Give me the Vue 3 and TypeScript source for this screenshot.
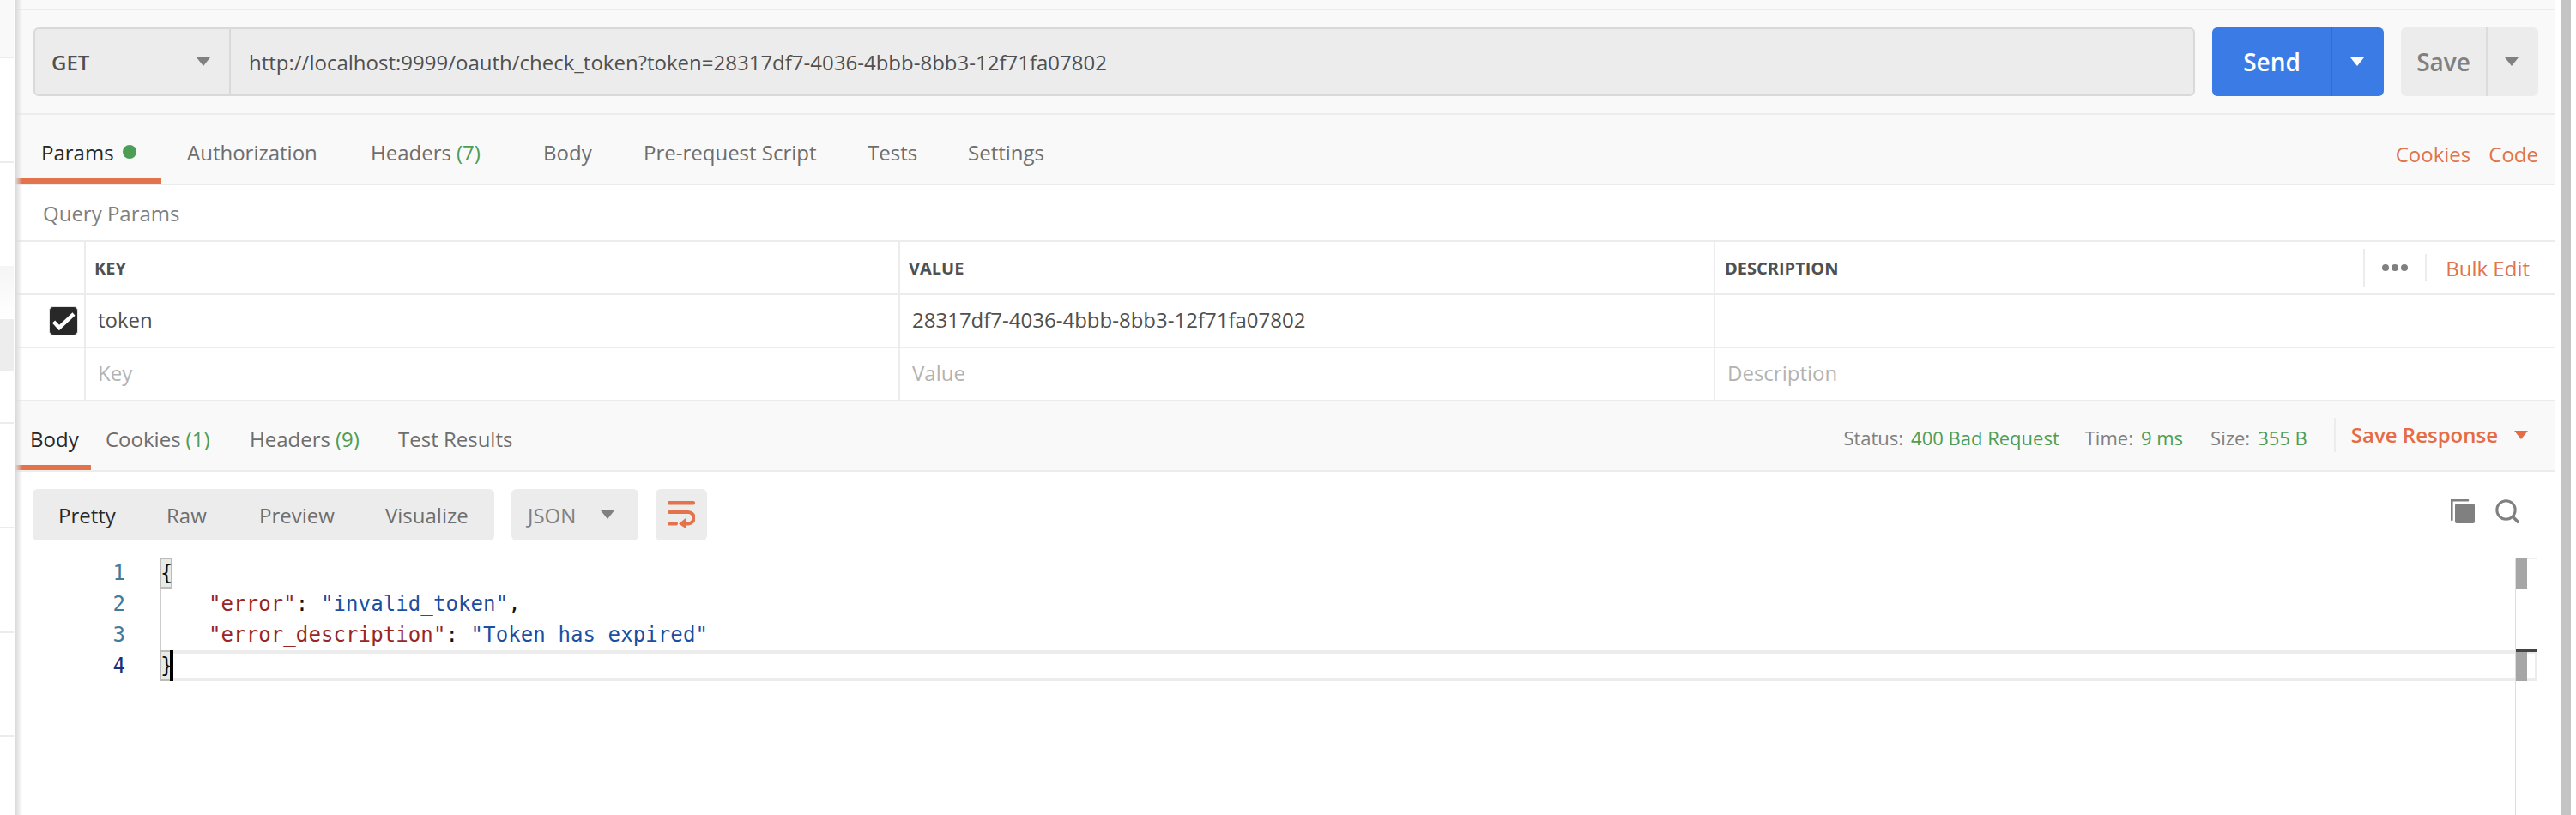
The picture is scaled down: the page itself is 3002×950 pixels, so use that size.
<script setup lang="ts">
const tabs: { label: string; count?: string; dot?: boolean; active?: boolean }[] = [
  { label: 'Params', dot: true, active: true },
  { label: 'Authorization' },
  { label: 'Headers', count: '(7)' },
  { label: 'Body' },
  { label: 'Pre-request Script' },
  { label: 'Tests' },
  { label: 'Settings' },
]
const respTabs: { label: string; count?: string; active?: boolean }[] = [
  { label: 'Body', active: true },
  { label: 'Cookies', count: '(1)' },
  { label: 'Headers', count: '(9)' },
  { label: 'Test Results' },
]
const views = ['Pretty', 'Raw', 'Preview', 'Visualize']
</script>

<template>
  <div class="page">
    <aside class="strip">
      <div class="s s1"></div>
      <div class="s s2"></div>
      <div class="s s3"></div>
      <div class="s s4"></div>
      <div class="s s5"></div>
      <div class="s s6"></div>
      <div class="s s7"></div>
      <div class="s s8"></div>
      <div class="s s9"></div>
      <div class="s s10"></div>
    </aside>

    <main class="main">
      <div class="top"></div>

      <div class="urlbar">
        <div class="address">
          <div class="method"><span>GET</span><i class="tri gray"></i></div>
          <div class="url">http://localhost:9999/oauth/check_token?token=28317df7-4036-4bbb-8bb3-12f71fa07802</div>
        </div>
        <div class="send">
          <span class="send-label">Send</span>
          <span class="send-drop"><i class="tri white"></i></span>
        </div>
        <div class="save">
          <span class="save-label">Save</span>
          <span class="save-drop"><i class="tri gray"></i></span>
        </div>
      </div>

      <nav class="req-tabs">
        <div v-for="t in tabs" :key="t.label" class="tab" :class="{ active: t.active }">
          {{ t.label }}<span v-if="t.count" class="count">{{ t.count }}</span><i v-if="t.dot" class="dot"></i>
        </div>
        <div class="req-links"><span>Cookies</span><span>Code</span></div>
      </nav>

      <div class="qp-title">Query Params</div>

      <div class="row head">
        <div class="c0"></div>
        <div class="c1">KEY</div>
        <div class="c2">VALUE</div>
        <div class="c3">
          <span>DESCRIPTION</span>
          <div class="head-tools">
            <span class="dots"><i></i><i></i><i></i></span>
            <span class="bulk">Bulk Edit</span>
          </div>
        </div>
      </div>
      <div class="row">
        <div class="c0">
          <span class="check">
            <svg width="32" height="32" viewBox="0 0 32 32"><path d="M4.5 17 L11 24 L28 8" fill="none" stroke="#fff" stroke-width="4.5" /></svg>
          </span>
        </div>
        <div class="c1 cell">token</div>
        <div class="c2 cell">28317df7-4036-4bbb-8bb3-12f71fa07802</div>
        <div class="c3 cell"></div>
      </div>
      <div class="row">
        <div class="c0"></div>
        <div class="c1 cell ph">Key</div>
        <div class="c2 cell ph">Value</div>
        <div class="c3 cell ph">Description</div>
      </div>

      <nav class="resp-tabs">
        <div v-for="t in respTabs" :key="t.label" class="tab" :class="{ active: t.active }">
          {{ t.label }}<span v-if="t.count" class="count">{{ t.count }}</span>
        </div>
        <div class="meta">
          <span class="m-label">Status:</span><span class="m-val mv1">400 Bad Request</span>
          <span class="m-label">Time:</span><span class="m-val mv2">9 ms</span>
          <span class="m-label">Size:</span><span class="m-val mv3">355 B</span>
          <span class="save-resp">Save Response<i class="tri orange"></i></span>
        </div>
      </nav>

      <div class="toolbar">
        <div class="views">
          <span v-for="(v, i) in views" :key="v" :class="{ on: i === 0 }">{{ v }}</span>
        </div>
        <div class="lang"><span>JSON</span><i class="tri gray"></i></div>
        <div class="wrap">
          <svg width="32" height="32" viewBox="0 0 32 32">
            <rect x="0" y="0" width="32" height="4.5" rx="2" fill="#e2734a" />
            <path d="M2 13 H24 a6.7 6.7 0 0 1 0 13.4 H18" fill="none" stroke="#e2734a" stroke-width="4" stroke-linecap="round" />
            <path d="M21 20 L13 26.4 L21 32 Z" fill="#e2734a" />
            <rect x="0" y="24.2" width="12" height="4.4" rx="2" fill="#e2734a" />
          </svg>
        </div>
        <div class="tools">
          <svg width="28" height="28" viewBox="0 0 28 28">
            <path d="M1.3 24 V1.3 H20" fill="none" stroke="#808080" stroke-width="2.6" stroke-linecap="round" />
            <rect x="5" y="5" width="23" height="23" rx="2" fill="#808080" />
          </svg>
          <svg width="28" height="28" viewBox="0 0 28 28">
            <circle cx="12.5" cy="12.5" r="10.7" fill="none" stroke="#808080" stroke-width="3" />
            <path d="M20.5 20.5 L26.5 26.5" stroke="#808080" stroke-width="3.6" stroke-linecap="round" />
          </svg>
        </div>
      </div>

      <section class="editor">
        <div class="gutter">
          <div>1</div><div>2</div><div>3</div><div class="cur">4</div>
        </div>
        <div class="code">
          <div class="line"><span class="br">{</span></div>
          <div class="line"><span class="k indent">"error"</span>: <span class="v">"invalid_token"</span>,</div>
          <div class="line"><span class="k indent">"error_description"</span>: <span class="v">"Token has expired"</span></div>
          <div class="line active"><span class="br">}</span><i class="caret"></i></div>
        </div>
        <div class="ruler">
          <i class="mark m1"></i>
          <i class="mark m2"></i>
          <i class="cursor-mark"></i>
        </div>
      </section>
    </main>

    <div class="scroll"></div>
  </div>
</template>

<style>
html, body { margin: 0; background: #fff; }
</style>

<style scoped>
.page {
  width: 3002px;
  height: 950px;
  display: flex;
  overflow: hidden;
  background: #fff;
  font-family: "Open Sans", sans-serif;
  font-size: 24px;
  color: #6e6e6e;
}
.strip { width: 16px; flex: none; display: flex; flex-direction: column; }
.s { flex: none; }
.s1 { height: 66px; background: #f9f9f9; border-bottom: 2px solid #ececec; }
.s2, .s3 { height: 120px; border-bottom: 2px solid #ececec; }
.s3 { height: 120px; border-bottom: 0; }
.s4 { height: 62px; background: linear-gradient(#f5f5f5, #fff); }
.s5 { height: 60px; background: #ededed; }
.s6 { height: 60px; border-bottom: 2px solid #ececec; }
.s7, .s8 { height: 120px; border-bottom: 2px solid #ececec; }
.s9 { height: 119px; border-bottom: 2px solid #ececec; }
.s10 { flex: 1; }

.main {
  width: 2960px;
  margin-left: 2px;
  flex: none;
  display: flex;
  flex-direction: column;
  position: relative;
}
.main::before {
  content: "";
  position: absolute;
  left: 0; top: 0; bottom: 0;
  width: 8px;
  background: linear-gradient(to right, #d9d9d9, rgba(217, 217, 217, 0));
  z-index: 3;
  pointer-events: none;
}
.top { height: 10px; background: #f9f9f9; border-bottom: 2px solid #ececec; }

.urlbar {
  height: 120px;
  box-sizing: content-box;
  background: #f9f9f9;
  border-bottom: 2px solid #ececec;
  display: flex;
  align-items: center;
  padding: 0 20px 0 21px;
  gap: 20px;
}
.address {
  flex: 1;
  height: 80px;
  box-sizing: border-box;
  display: flex;
  background: #ececec;
  border: 2px solid #d9d9d9;
  border-radius: 6px;
}
.method {
  width: 228px;
  flex: none;
  box-sizing: border-box;
  border-right: 2px solid #d9d9d9;
  padding: 0 20px 0 19px;
  display: flex;
  align-items: center;
  justify-content: space-between;
  font-weight: 600;
  color: #505050;
}
.method .tri { margin-right: 2px; }
.url {
  flex: 1;
  display: flex;
  align-items: center;
  padding-left: 21px;
  color: #505050;
}
.tri {
  display: block;
  width: 0; height: 0;
  border-left: 8px solid transparent;
  border-right: 8px solid transparent;
}
.tri.gray { border-top: 10px solid #808080; }
.tri.white { border-top: 10px solid #fff; }
.tri.orange { border-top: 10px solid #e56c45; }

.send {
  width: 200px; height: 80px; flex: none;
  display: flex;
  background: #3a7be5;
  border-radius: 6px;
  color: #fff;
  font-size: 28px;
  font-weight: 600;
}
.send-label { width: 139px; display: flex; align-items: center; justify-content: center; border-right: 1px solid #2f6dd3; }
.send-drop { flex: 1; display: flex; align-items: center; justify-content: center; padding-right: 2px; }
.save {
  width: 160px; height: 80px; flex: none;
  display: flex;
  background: #ececec;
  border-radius: 6px;
  color: #808080;
  font-size: 28px;
  font-weight: 600;
}
.save-label { width: 99px; display: flex; align-items: center; justify-content: center; border-right: 2px solid #dcdcdc; }
.save-drop { flex: 1; display: flex; align-items: center; justify-content: center; padding-right: 4px; }

.req-tabs {
  height: 80px;
  background: #f9f9f9;
  border-bottom: 2px solid #ececec;
  display: grid;
  grid-template-columns: 200px 214px 201px 117px 261px 117px 1fr auto;
  align-items: center;
}
.tab { position: relative; height: 100%; box-sizing: border-box; padding-top: 6px; display: flex; align-items: center; white-space: nowrap; }
.req-tabs .tab:first-child { padding-left: 30px; }
.tab.active { color: #282828; }
.tab.active::after {
  content: "";
  position: absolute;
  left: 0;
  bottom: 0;
  height: 6px;
  background: #e2734a;
}
.req-tabs .tab.active::after { width: 170px; }
.resp-tabs .tab.active::after { width: 88px; }
.count { color: #4d9d55; margin-left: 6px; }
.dot { width: 16px; height: 16px; border-radius: 50%; background: #4d9d55; margin-left: 10px; }
.req-links { display: flex; gap: 21px; padding-right: 20px; padding-top: 10px; color: #e2734a; }

.qp-title {
  height: 64px;
  box-sizing: content-box;
  border-bottom: 2px solid #ececec;
  display: flex;
  align-items: center;
  padding-left: 32px;
  color: #808080;
}

.row {
  display: grid;
  grid-template-columns: 82px 949px 950px 979px;
  height: 60px;
  border-bottom: 2px solid #ececec;
}
.row > div { display: flex; align-items: center; box-sizing: border-box; }
.c0 { border-right: 2px solid #ececec; justify-content: flex-end; padding-right: 7px; }
.c1, .c2 { border-right: 2px solid #ececec; padding-left: 10px; }
.c3 { padding-left: 11px; }
.head > div { font-size: 20px; font-weight: 700; color: #505050; }
.cell { padding-left: 14px; padding-bottom: 3px; color: #505050; }
.c3.cell { padding-left: 14px; }
.ph { color: #b3b3b3; }
.head-tools {
  margin-left: auto;
  display: flex;
  align-items: center;
  height: 44px;
  border-left: 2px solid #ececec;
  margin-right: 30px;
  padding-left: 20px;
}
.dots { display: flex; gap: 3px; height: 32px; align-items: center; border-right: 2px solid #ececec; padding-right: 20px; }
.dots i { width: 8px; height: 8px; border-radius: 50%; background: #808080; }
.bulk { font-size: 24px; font-weight: 400; color: #e2734a; padding-left: 22px; }
.check {
  width: 34px; height: 34px;
  box-sizing: border-box;
  background: #282828;
  border: 1px solid #e3e3e3;
  border-radius: 5px;
  display: flex;
}

.resp-tabs {
  height: 80px;
  background: #f9f9f9;
  border-bottom: 2px solid #ececec;
  display: grid;
  grid-template-columns: 105px 168px 173px 1fr auto;
  align-items: center;
}
.resp-tabs .tab:first-child { padding-left: 17px; }
.meta { display: flex; align-items: center; font-size: 22px; height: 100%; padding-right: 32px; padding-top: 3px; box-sizing: border-box; }
.m-label { color: #808080; margin-right: 9px; }
.m-val { color: #4d9d55; }
.mv1 { margin-right: 30px; }
.mv2 { margin-right: 32px; }
.mv3 { margin-right: 31px; }
.save-resp {
  display: flex;
  align-items: center;
  height: 40px;
  margin-top: -6px;
  border-left: 2px solid #ececec;
  padding-left: 18px;
  font-size: 24px;
  font-weight: 600;
  color: #e56c45;
  gap: 19px;
}

.toolbar { display: flex; gap: 20px; padding: 20px 42px 20px 20px; }
.views {
  width: 538px; height: 60px;
  box-sizing: border-box;
  padding-left: 30px;
  background: #ececec;
  border-radius: 6px;
  display: grid;
  grid-template-columns: 126px 108px 147px auto;
  align-items: center;
}
.views .on { color: #282828; }
.lang {
  width: 148px; height: 60px;
  box-sizing: border-box;
  background: #ececec;
  border-radius: 6px;
  display: flex;
  align-items: center;
  justify-content: space-between;
  padding: 0 28px 0 19px;
  color: #808080;
}
.wrap {
  width: 60px; height: 60px;
  background: #ececec;
  border-radius: 6px;
  display: flex;
  align-items: center;
  justify-content: center;
}
.tools { margin-left: auto; display: flex; gap: 24px; height: 28px; margin-top: 12px; }

.editor {
  position: relative;
  flex: 1;
  display: flex;
  font-family: "DejaVu Sans Mono", monospace;
  font-size: 24px;
  line-height: 36px;
  padding-right: 21px;
}
.gutter { width: 168px; flex: none; box-sizing: border-box; padding-right: 40px; text-align: right; color: #437a99; }
.gutter .cur { color: #1a2f7a; }
.code { flex: 1; color: #111; letter-spacing: 0.1px; }
.line {
  height: 36px;
  white-space: pre;
  padding-left: 1px;
  position: relative;
  box-shadow: inset 2px 0 0 #cccccc;
}
.line.active {
  box-sizing: border-box;
  height: 36px;
  line-height: 28px;
  border-top: 4px solid #ececec;
  border-bottom: 4px solid #ececec;
  border-right: 3px solid #ececec;
  box-shadow: none;
}
.br {
  display: inline-block;
  width: 14px;
  height: 36px;
  margin-left: -1px;
  padding-left: 1px;
  background: #e8ebe4;
  box-shadow: inset 0 0 0 2px #bbbbbb;
  vertical-align: top;
}
.active .br { margin-top: -4px; line-height: 36px; }
.indent { margin-left: 56px; }
.k { color: #992626; }
.v { color: #1c4f9f; }
.caret { position: absolute; left: 12px; top: -4px; bottom: -4px; width: 4px; background: #000; }
.ruler {
  position: absolute;
  left: 2913px;
  top: 0; bottom: 0;
  width: 26px;
  box-sizing: border-box;
  border-left: 1px solid #dddddd;
  border-top: 2px solid #eeeeee;
}
.mark { position: absolute; left: 0; width: 13px; height: 36px; background: #a6a6a6; }
.m1 { top: -2px; }
.m2 { top: 106px; }
.cursor-mark { position: absolute; left: 0; right: 0; top: 104px; height: 4px; background: #444; }

.scroll { width: 12px; margin-left: 6px; flex: none; background: #c4c4c4; }
</style>
